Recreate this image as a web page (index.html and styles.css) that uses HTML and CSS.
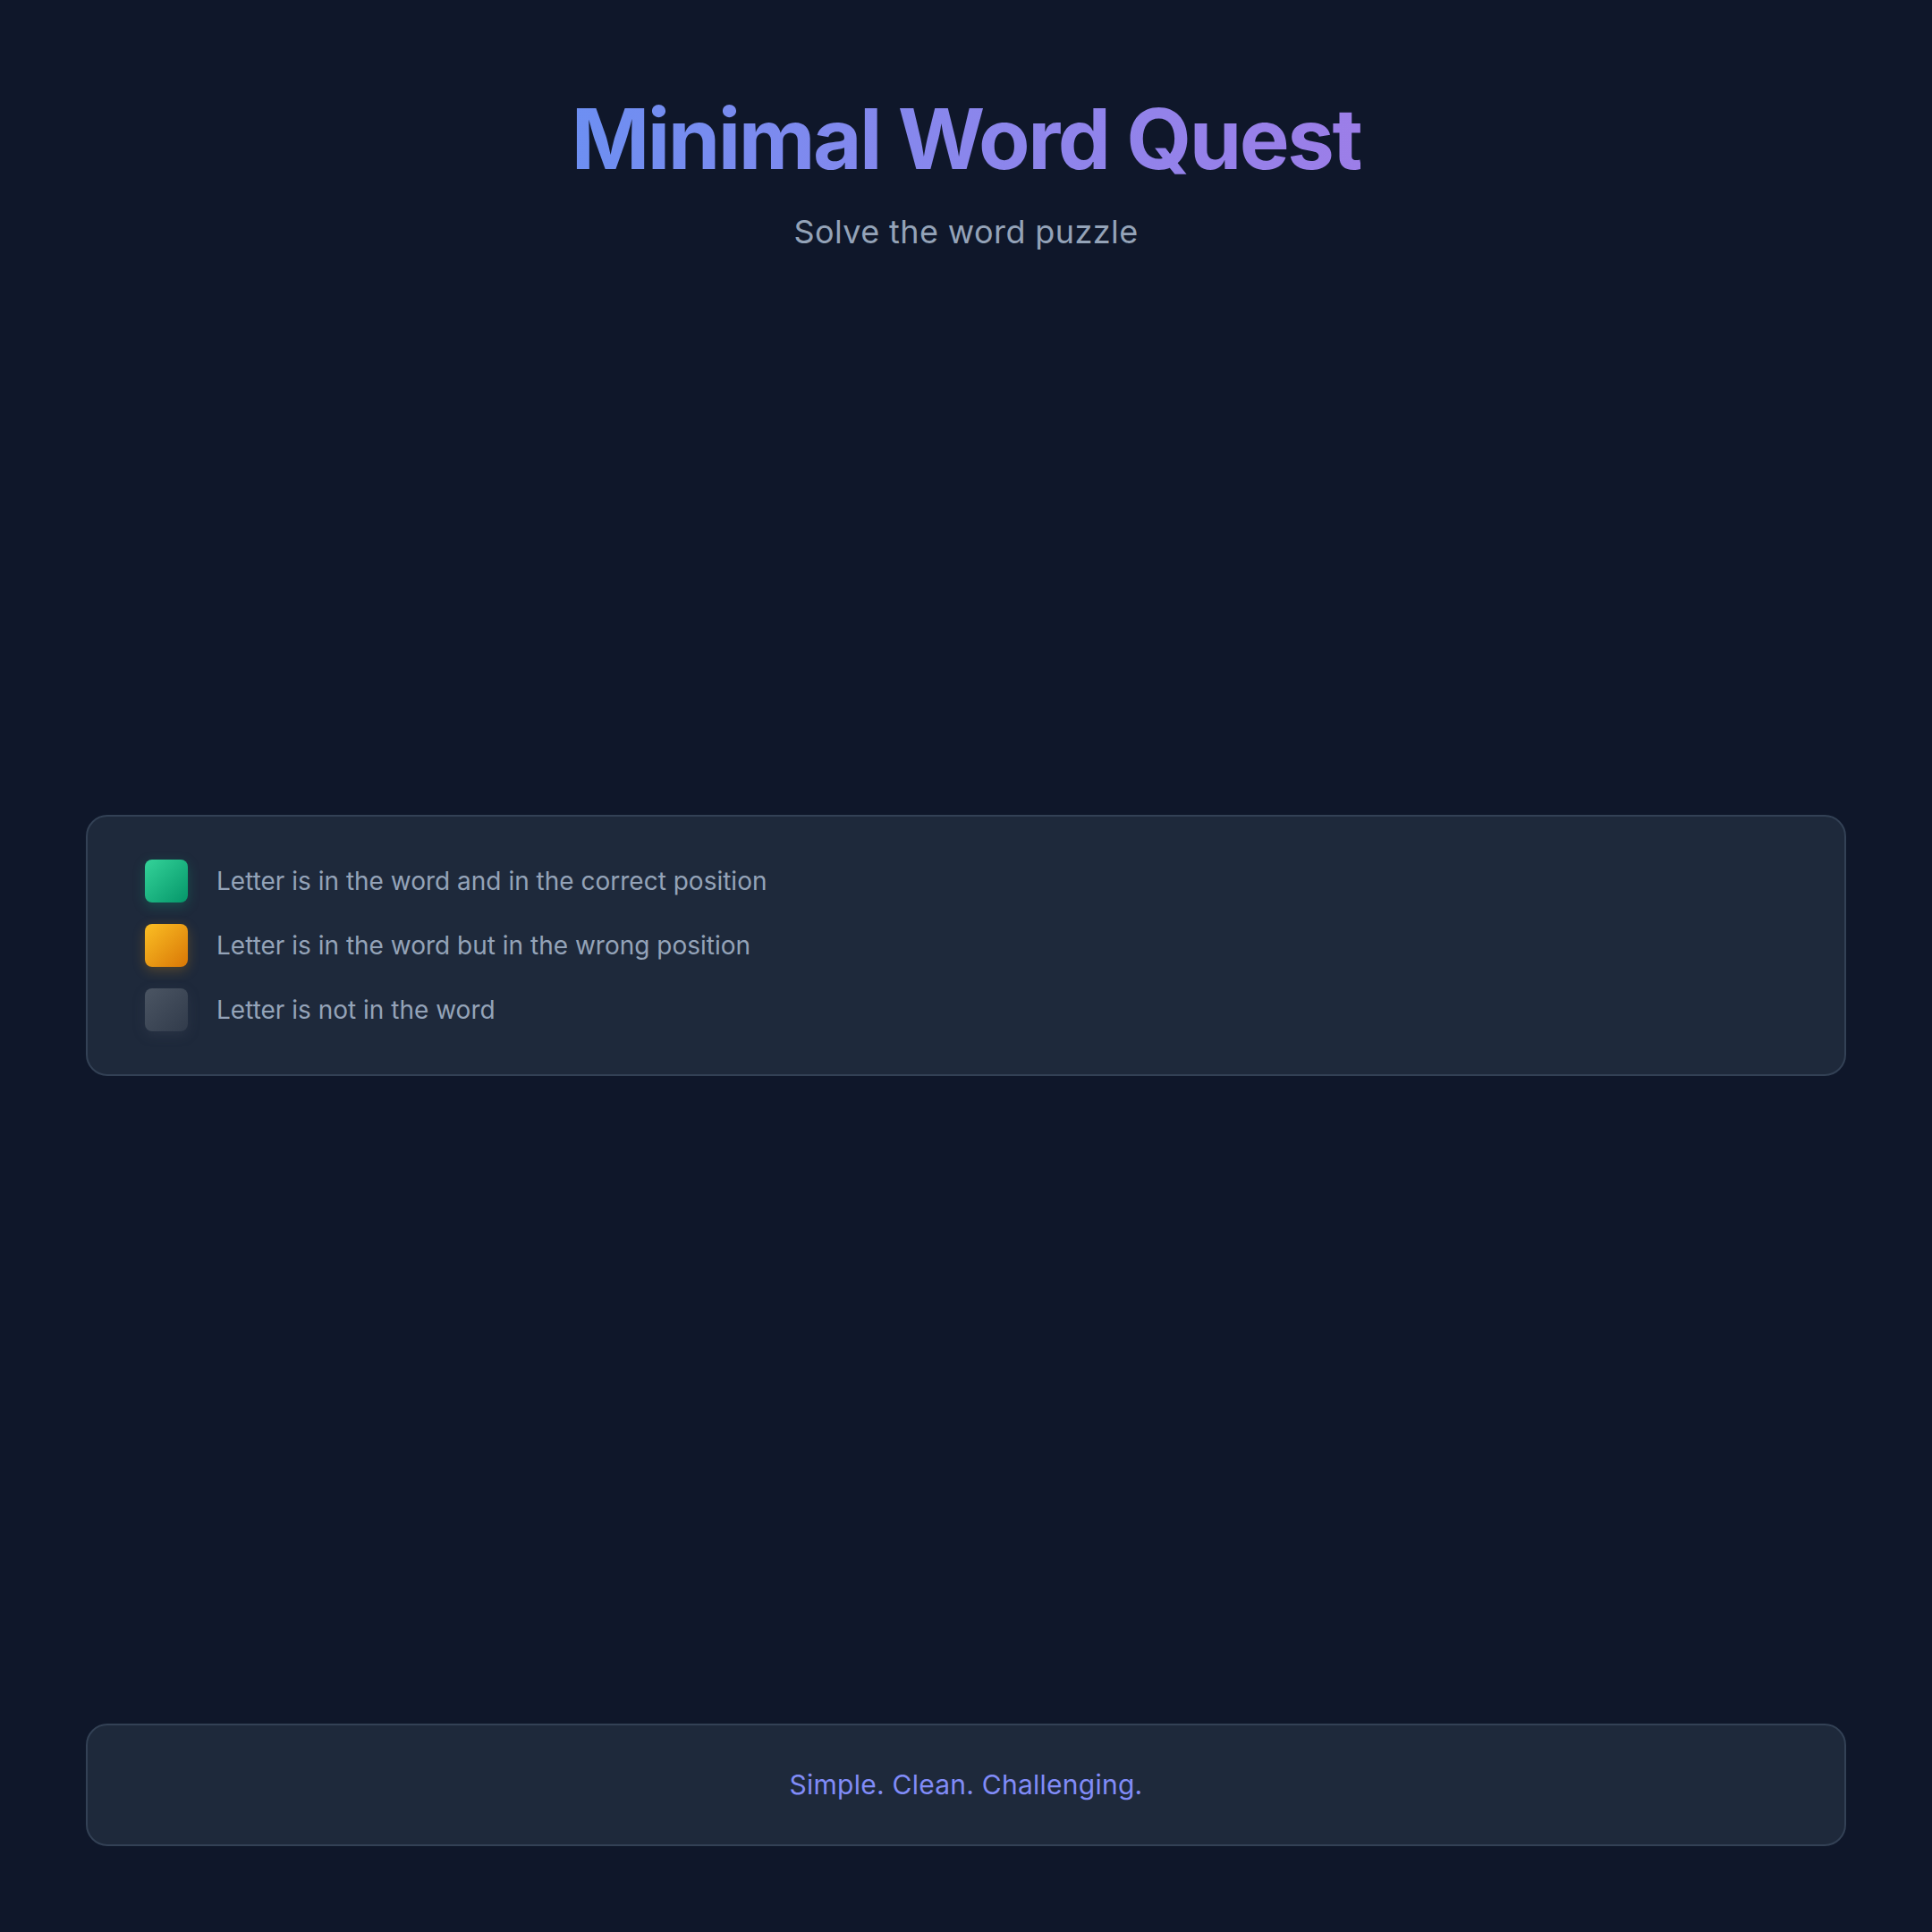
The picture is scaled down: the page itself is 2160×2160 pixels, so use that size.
FILE: index.html
```html
<!DOCTYPE html>
<html lang="en">
<head>
<meta charset="utf-8">
<title>Minimal Word Quest</title>
<link rel="stylesheet" href="styles.css">
</head>
<body>
<div class="page">
  <header class="header">
    <h1 class="title">Minimal Word Quest</h1>
    <p class="subtitle">Solve the word puzzle</p>
  </header>
  <main class="game">
    <section class="legend">
      <div class="legend-item">
        <span class="swatch swatch-correct"></span>
        <span class="legend-text">Letter is in the word and in the correct position</span>
      </div>
      <div class="legend-item">
        <span class="swatch swatch-present"></span>
        <span class="legend-text">Letter is in the word but in the wrong position</span>
      </div>
      <div class="legend-item">
        <span class="swatch swatch-absent"></span>
        <span class="legend-text">Letter is not in the word</span>
      </div>
    </section>
  </main>
  <footer class="footer">
    <p class="tagline">Simple. Clean. Challenging.</p>
  </footer>
</div>
</body>
</html>
```

FILE: styles.css
```css
* {
  box-sizing: border-box;
}

html, body {
  margin: 0;
  padding: 0;
  background: #0f172a;
}

body {
  font-family: "Inter", "Noto Sans", "Liberation Sans", sans-serif;
  color: #94a3b8;
}

.page {
  min-height: 100vh;
  padding: 96px;
  display: flex;
  flex-direction: column;
}

.header {
  text-align: center;
  padding-top: 3px;
}

.title {
  margin: 0;
  display: inline-block;
  font-size: 94px;
  line-height: 1.2;
  font-weight: 700;
  letter-spacing: -2.5px;
  background: linear-gradient(90deg, #6d8ff2 0%, #8a86ec 50%, #9c7ee8 100%);
  -webkit-background-clip: text;
  background-clip: text;
  color: transparent;
}

.subtitle {
  margin: 22px 0 0;
  font-size: 36px;
  line-height: 1.4;
  letter-spacing: 0.4px;
  color: #94a3b8;
}

.game {
  flex: 1;
  display: flex;
  flex-direction: column;
  justify-content: center;
}

.legend {
  background: #1e293b;
  border: 2px solid #334155;
  border-radius: 24px;
  padding: 48px 64px;
  display: flex;
  flex-direction: column;
  gap: 24px;
}

.legend-item {
  display: flex;
  align-items: center;
  gap: 32px;
}

.swatch {
  width: 48px;
  height: 48px;
  border-radius: 8px;
  flex: none;
}

.swatch-correct {
  background: linear-gradient(135deg, #34d399, #059669);
  box-shadow: 0 4px 14px rgba(16, 185, 129, 0.25);
}

.swatch-present {
  background: linear-gradient(135deg, #fbbf24, #d97706);
  box-shadow: 0 4px 14px rgba(245, 158, 11, 0.25);
}

.swatch-absent {
  background: linear-gradient(135deg, #4b5563, #313b4b);
  box-shadow: 0 4px 14px rgba(75, 85, 99, 0.25);
}

.legend-text {
  font-size: 28px;
  line-height: 1.4;
  color: #94a3b8;
}

.footer {
  margin-top: 97px;
  background: #1e293b;
  border: 2px solid #334155;
  border-radius: 24px;
  padding: 46px 32px;
  text-align: center;
}

.tagline {
  margin: 0;
  font-size: 30px;
  line-height: 41px;
  letter-spacing: 0.25px;
  color: #818cf8;
}
```
